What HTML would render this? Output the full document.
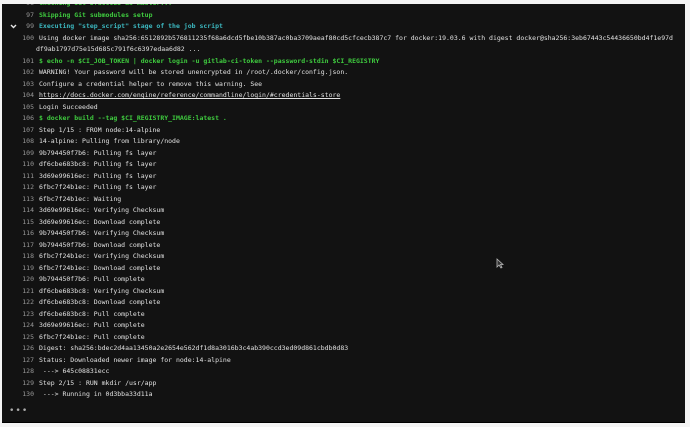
<!DOCTYPE html>
<html><head><style>
html,body{margin:0;padding:0;background:#f4f4f4;width:690px;height:427px;overflow:hidden}
#p{position:absolute;left:2px;top:4px;width:683px;height:418px;background:#121212;border-bottom:1px solid #000;overflow:hidden}
.r{position:absolute;left:0;height:11px;line-height:11px;font-family:"DejaVu Sans Mono","Liberation Mono",monospace;font-size:6.5px;color:#e2e2e2;white-space:pre}
.n{position:absolute;left:0;width:32px;text-align:right;color:#999}
.t{position:absolute;left:37px}
.g{color:#3fcc3f;font-weight:bold}
.c{color:#3cb8c0;font-weight:bold}
.u{text-decoration:underline}
</style></head><body>
<div id="p">
<div class="r" style="top:-6px"><span class="n">96</span><span class="t g">Checking out 3fdcc0b3 as master...</span></div>
<div class="r" style="top:6px"><span class="n">97</span><span class="t g">Skipping Git submodules setup</span></div>
<div class="r" style="top:17px"><svg style="position:absolute;left:8px;top:3px" width="7" height="5" viewBox="0 0 7 5"><path d="M1 1 L3.5 3.5 L6 1" fill="none" stroke="#e6e6e6" stroke-width="1.4"/></svg><span class="n">99</span><span class="t c">Executing "step_script" stage of the job script</span></div>
<div class="r" style="top:29px"><span class="n">100</span><span class="t">Using docker image sha256:6512892b576811235f68a6dcd5fbe10b387ac0ba3709aeaf80cd5cfcecb387c7 for docker:19.03.6 with digest docker@sha256:3eb67443c54436650bd4f1e97d</span></div>
<div class="r" style="top:40px"><span class="t" style="left:34px">df9ab1797d75e15d685c791f6c6397edaa6d82 ...</span></div>
<div class="r" style="top:52px"><span class="n">101</span><span class="t g">$ echo -n $CI_JOB_TOKEN | docker login -u gitlab-ci-token --password-stdin $CI_REGISTRY</span></div>
<div class="r" style="top:63px"><span class="n">102</span><span class="t">WARNING! Your password will be stored unencrypted in /root/.docker/config.json.</span></div>
<div class="r" style="top:75px"><span class="n">103</span><span class="t">Configure a credential helper to remove this warning. See</span></div>
<div class="r" style="top:86px"><span class="n">104</span><span class="t u">https://docs.docker.com/engine/reference/commandline/login/#credentials-store</span></div>
<div class="r" style="top:98px"><span class="n">105</span><span class="t">Login Succeeded</span></div>
<div class="r" style="top:109px"><span class="n">106</span><span class="t g">$ docker build --tag $CI_REGISTRY_IMAGE:latest .</span></div>
<div class="r" style="top:121px"><span class="n">107</span><span class="t">Step 1/15 : FROM node:14-alpine</span></div>
<div class="r" style="top:132px"><span class="n">108</span><span class="t">14-alpine: Pulling from library/node</span></div>
<div class="r" style="top:144px"><span class="n">109</span><span class="t">9b794450f7b6: Pulling fs layer</span></div>
<div class="r" style="top:155px"><span class="n">110</span><span class="t">df6cbe683bc8: Pulling fs layer</span></div>
<div class="r" style="top:167px"><span class="n">111</span><span class="t">3d69e99616ec: Pulling fs layer</span></div>
<div class="r" style="top:178px"><span class="n">112</span><span class="t">6fbc7f24b1ec: Pulling fs layer</span></div>
<div class="r" style="top:190px"><span class="n">113</span><span class="t">6fbc7f24b1ec: Waiting</span></div>
<div class="r" style="top:201px"><span class="n">114</span><span class="t">3d69e99616ec: Verifying Checksum</span></div>
<div class="r" style="top:213px"><span class="n">115</span><span class="t">3d69e99616ec: Download complete</span></div>
<div class="r" style="top:224px"><span class="n">116</span><span class="t">9b794450f7b6: Verifying Checksum</span></div>
<div class="r" style="top:236px"><span class="n">117</span><span class="t">9b794450f7b6: Download complete</span></div>
<div class="r" style="top:247px"><span class="n">118</span><span class="t">6fbc7f24b1ec: Verifying Checksum</span></div>
<div class="r" style="top:259px"><span class="n">119</span><span class="t">6fbc7f24b1ec: Download complete</span></div>
<div class="r" style="top:270px"><span class="n">120</span><span class="t">9b794450f7b6: Pull complete</span></div>
<div class="r" style="top:282px"><span class="n">121</span><span class="t">df6cbe683bc8: Verifying Checksum</span></div>
<div class="r" style="top:293px"><span class="n">122</span><span class="t">df6cbe683bc8: Download complete</span></div>
<div class="r" style="top:305px"><span class="n">123</span><span class="t">df6cbe683bc8: Pull complete</span></div>
<div class="r" style="top:316px"><span class="n">124</span><span class="t">3d69e99616ec: Pull complete</span></div>
<div class="r" style="top:328px"><span class="n">125</span><span class="t">6fbc7f24b1ec: Pull complete</span></div>
<div class="r" style="top:339px"><span class="n">126</span><span class="t">Digest: sha256:bdec2d4aa13450a2e2654e562df1d8a3016b3c4ab390ccd3ed09d861cbdb0d83</span></div>
<div class="r" style="top:351px"><span class="n">127</span><span class="t">Status: Downloaded newer image for node:14-alpine</span></div>
<div class="r" style="top:362px"><span class="n">128</span><span class="t"> ---&gt; 645c08831ecc</span></div>
<div class="r" style="top:374px"><span class="n">129</span><span class="t">Step 2/15 : RUN mkdir /usr/app</span></div>
<div class="r" style="top:385px"><span class="n">130</span><span class="t"> ---&gt; Running in 0d3bba33d11a</span></div>
<div class="r" style="top:402px;font-size:9px;color:#aaa"><span style="position:absolute;left:7px;letter-spacing:1px">•••</span></div>
<svg style="position:absolute;left:494px;top:254px" width="8" height="11" viewBox="0 0 8 11"><path d="M1 1 L1 9 L3 7 L5 10 L6 9.5 L4.5 6.5 L7 6.5 Z" fill="#333" stroke="#bbb" stroke-width="0.8"/></svg>
</div>
</body></html>
